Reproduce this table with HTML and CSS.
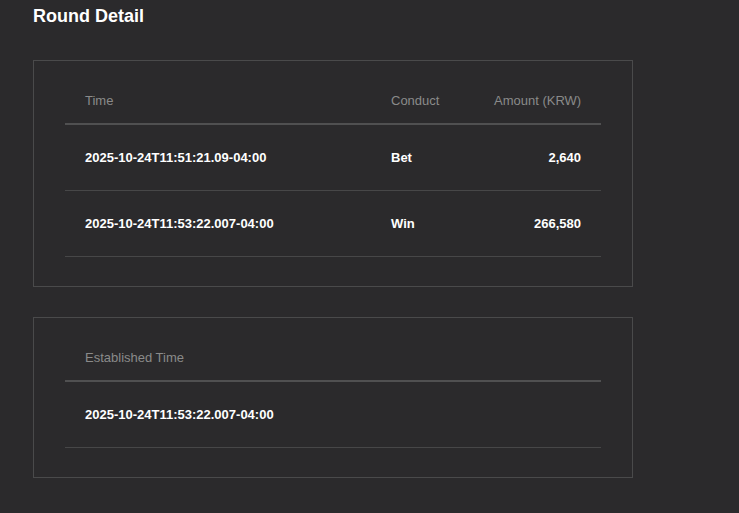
FILE: index.html
```html
<!DOCTYPE html>
<html lang="en">
<head>
<meta charset="utf-8">
<title>Round Detail</title>
<link rel="stylesheet" href="styles.css">
</head>
<body>
<main class="page">
  <h1 class="title">Round Detail</h1>
  <section class="card">
    <table class="grid">
      <colgroup>
        <col class="c-time">
        <col class="c-conduct">
        <col class="c-amount">
      </colgroup>
      <thead>
        <tr><th>Time</th><th>Conduct</th><th class="num">Amount (KRW)</th></tr>
      </thead>
      <tbody>
        <tr><td>2025-10-24T11:51:21.09-04:00</td><td>Bet</td><td class="num">2,640</td></tr>
        <tr><td>2025-10-24T11:53:22.007-04:00</td><td>Win</td><td class="num">266,580</td></tr>
      </tbody>
    </table>
  </section>
  <section class="card">
    <table class="grid">
      <thead>
        <tr><th>Established Time</th></tr>
      </thead>
      <tbody>
        <tr><td>2025-10-24T11:53:22.007-04:00</td></tr>
      </tbody>
    </table>
  </section>
</main>
</body>
</html>
```

FILE: styles.css
```css
html, body {
  margin: 0;
  padding: 0;
  background: #2b2a2c;
}
body {
  font-family: Arial, "Liberation Sans", sans-serif;
  color: #ffffff;
}
.page {
  padding: 6px 33px 0 33px;
  display: flex;
  flex-direction: column;
  gap: 30px;
  width: 600px;
}
.title {
  margin: 0 0 3px 0;
  font-size: 18px;
  font-weight: bold;
  line-height: 21px;
  color: #ffffff;
}
.card {
  border: 1px solid #4a4a4b;
  padding: 16px 31px 29px 31px;
}
.grid {
  width: 536px;
  border-collapse: collapse;
  table-layout: fixed;
}
.c-time { width: 306px; }
.c-conduct { width: 103px; }
.c-amount { width: 127px; }
.grid th {
  text-align: left;
  font-weight: normal;
  font-size: 13px;
  line-height: 16px;
  color: #8a8a8a;
  white-space: nowrap;
  padding: 16px 20px 14px 20px;
  border-bottom: 2px solid #505051;
}
.grid td {
  font-size: 13px;
  font-weight: bold;
  line-height: 16px;
  color: #ffffff;
  white-space: nowrap;
  padding: 25px 20px 24px 20px;
  border-bottom: 1px solid #474748;
}
.grid .num {
  text-align: right;
}
```
